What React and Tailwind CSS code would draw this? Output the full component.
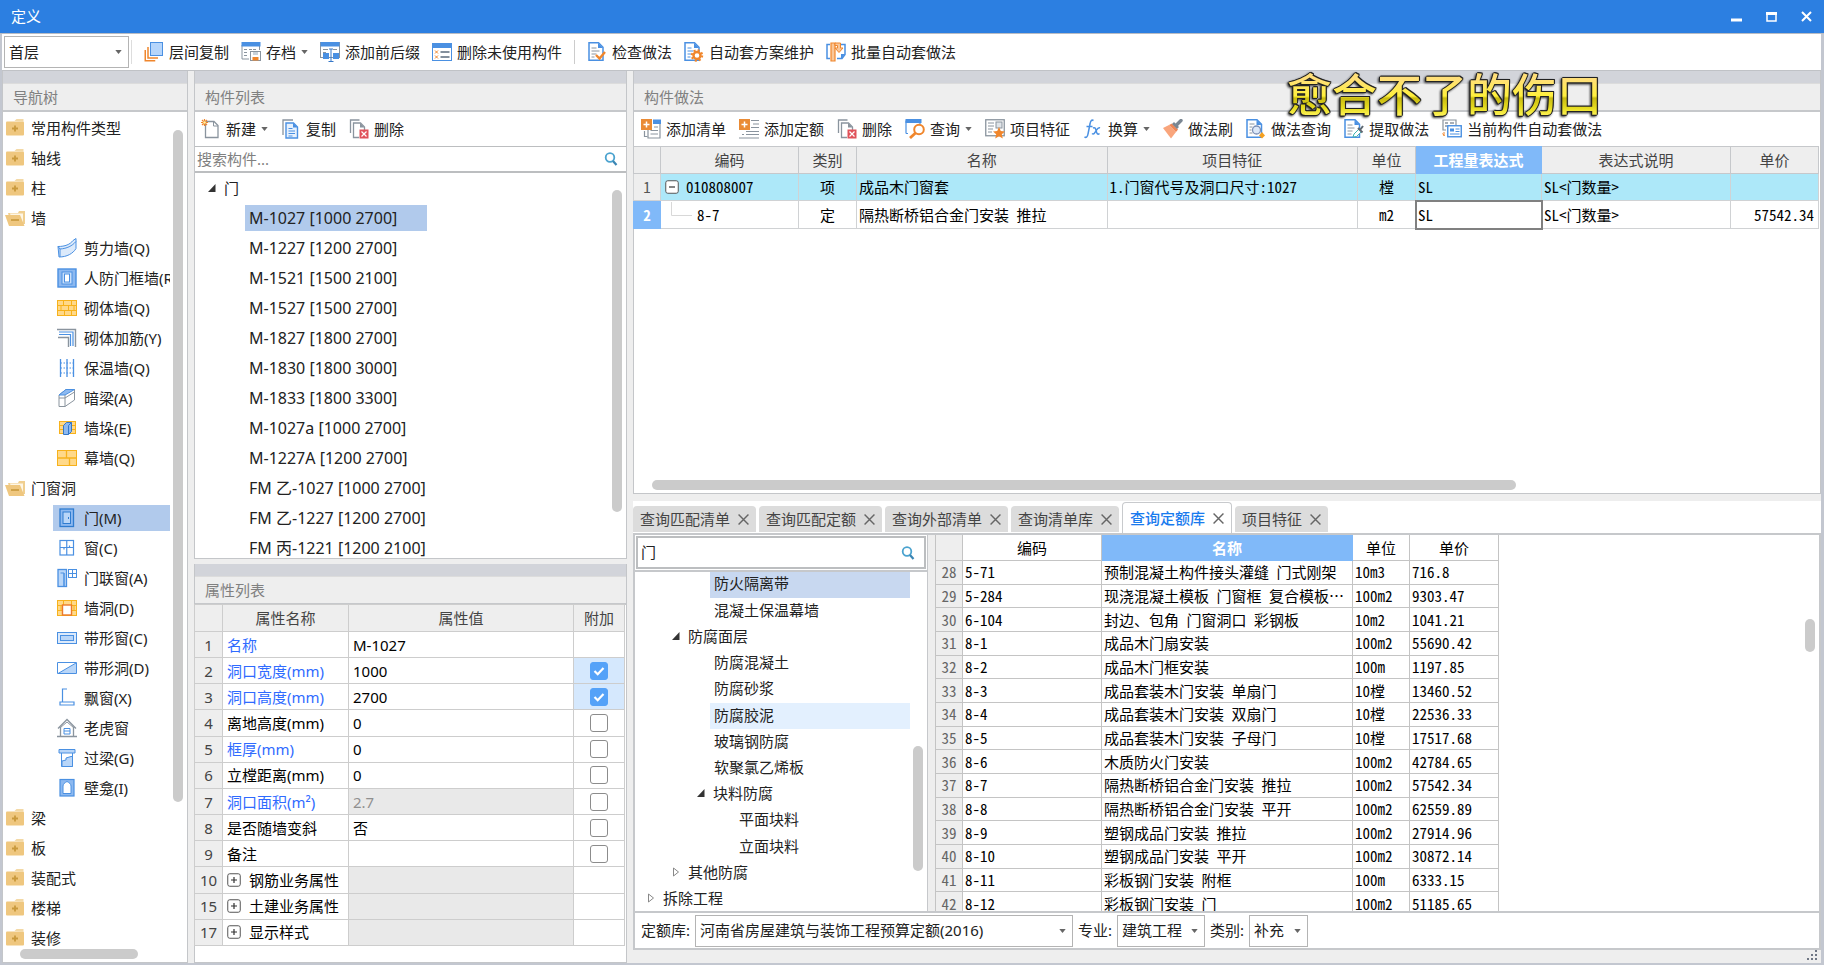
import React from "react";

const UI = "font-['Noto_Sans','Noto_Sans_CJK_SC',sans-serif]";
const MONO = "font-['Noto_Sans_Mono_CJK_SC','Noto_Sans_CJK_SC',monospace]";

const B = "#4a90e2";
const G = "#8a949e";
const O = "#f0862c";

function Icon({ children, className = "" }) {
  return (
    <svg viewBox="0 0 20 20" width="20" height="20" fill="none" aria-hidden="true" className={"shrink-0 " + className}>
      {children}
    </svg>
  );
}

const brick = (
  <>
    <rect x="0.5" y="2.5" width="19" height="15" fill="#ffd98a" stroke="#f7b21c" />
    <path d="M0 7.5h20M0 12.5h20M6.500 3v4.500M14.500 3v4.500M4 7.500v5M11.500 7.500v5M17 7.500v5M7.500 12.500v5M14.500 12.500v5" stroke="#f7b21c" />
  </>
);

const icons = {
  layerCopy: (
    <Icon>
      <path d="M4 5v11h10" stroke={O} strokeWidth="1.500" />
      <path d="M1.250 8v10.750h10" stroke={O} strokeWidth="1.500" />
      <rect x="6.500" y="0.500" width="12" height="13" fill="#b5d5fb" stroke={B} />
    </Icon>
  ),
  archive: (
    <Icon>
      <path d="M1 17V3h17.500v5M1 17h7" stroke={G} />
      <rect x="0.500" y="0" width="19" height="4.500" fill={B} />
      <path d="M3 7.500h3M3 10.500h3M3 13.500h3M8 7.500h8" stroke={G} strokeDasharray="3 1" />
      <rect x="9.500" y="9.500" width="10" height="9" fill="#fff" stroke={G} />
      <rect x="12" y="10" width="5" height="3" fill="#c9d2da" />
      <rect x="11.500" y="15" width="6" height="3.500" fill={O} />
    </Icon>
  ),
  affix: (
    <Icon>
      <rect x="0.500" y="0.500" width="19" height="15" fill="#fff" stroke={G} />
      <rect x="0.500" y="0" width="19" height="4.500" fill={B} />
      <path d="M3 7.500h5M3 10.500h3M13 7.500h4" stroke={G} />
      <rect x="3" y="11" width="6" height="6" fill={B} />
      <rect x="13" y="11" width="6" height="6" fill={B} />
      <path d="M11 7v12M8.500 19.500h5M9 7h4" stroke="#3577c8" />
    </Icon>
  ),
  delUnused: (
    <Icon>
      <rect x="0.500" y="2" width="19" height="16.500" fill="#fff" stroke={B} />
      <rect x="0" y="1" width="20" height="5" fill={B} />
      <path d="M3 8.500l3 3M6 8.500l-3 3M3 13.500l3 3M6 13.500l-3 3" stroke={O} />
      <path d="M8.500 10h9M8.500 15h9" stroke="#5b6b7c" strokeWidth="1.400" />
    </Icon>
  ),
  check: (
    <Icon>
      <path d="M2 .750h9.500l4.500 4.500v13H2z" fill="#fff" stroke={B} strokeWidth="1.500" />
      <path d="M11 1v5h5z" fill={B} />
      <path d="M4.500 6h5M4.500 9h8M4.500 12h5M4.500 15h3" stroke={G} />
      <path d="M9 13l3.500 3.500L18 10" stroke={O} strokeWidth="2.400" />
    </Icon>
  ),
  gearDoc: (
    <Icon>
      <path d="M1 .750h9.500l4.500 4.500v13H1z" fill="#fff" stroke={B} strokeWidth="1.500" />
      <path d="M10 1v5h5z" fill={B} />
      <path d="M3.500 6h4M3.500 9h6M3.500 12h4M3.500 15h3" stroke={B} />
      <circle cx="13" cy="13.500" r="3.500" fill="#fff" stroke={O} strokeWidth="2.400" />
      <circle cx="13" cy="13.500" r="5.200" stroke={O} strokeWidth="2" strokeDasharray="2.040 2.040" />
    </Icon>
  ),
  batch: (
    <Icon>
      <path d="M4 2.500H1v14h3M13 2.500h6v10l-3 4h-5" stroke={B} strokeWidth="1.500" />
      <path d="M19 12h-4v5z" fill={B} />
      <path d="M5 1h4v18H5z" fill="#f9c79a" stroke={O} strokeWidth="1.200" />
      <path d="M9 1h5.500v5H17l-4 4.500L9 6h2.500V3.500H9z" fill="#f9c79a" stroke={O} />
    </Icon>
  ),
  newDoc: (
    <Icon>
      <path d="M4.500 2.500h8.500l4 4v12H4.500z" fill="#fff" stroke={G} strokeWidth="1.300" />
      <path d="M12.500 2.500v4.500h4.500" stroke={G} />
      <path d="M3.500 0v7M0 3.500h7M1 1l5 5M6 1L1 6" stroke={O} strokeWidth="1.200" />
      <circle cx="3.500" cy="3.500" r="1.300" fill="#fff3a0" />
    </Icon>
  ),
  copy: (
    <Icon>
      <path d="M2 16V1h10" stroke={G} strokeWidth="1.300" />
      <path d="M5 4h7.500l4 4v11H5z" fill="#e7f1fd" stroke={B} strokeWidth="1.400" />
      <path d="M12 4v4.500h4.500z" fill={B} />
      <path d="M7.500 9.500h4M7.500 12h6.500M7.500 14.500h6.500M7.500 17h4" stroke={B} />
    </Icon>
  ),
  del: (
    <Icon>
      <path d="M1.500 14V1h9" stroke={G} strokeWidth="1.300" />
      <path d="M10 18.500H4.500V4h7l4 4v4" fill="#fff" stroke={G} strokeWidth="1.300" />
      <path d="M11 4v4.500h4.500z" fill={G} />
      <rect x="10.500" y="10.500" width="9" height="9" fill="#e0525a" />
      <path d="M12.500 12.500l5 5M17.500 12.500l-5 5" stroke="#fff" strokeWidth="1.200" />
    </Icon>
  ),
  addList: (
    <Icon>
      <path d="M7 5v14h12V1" fill="#fff" stroke={G} strokeWidth="1.200" />
      <path d="M3.500 12v5.500h3" stroke={G} strokeWidth="1.200" />
      <rect x="12" y="0.500" width="8" height="4.500" fill={B} />
      <path d="M13 8h4M9.500 11.500h7.500M9.500 15h7.500" stroke={G} />
      <rect x="0" y="0" width="11" height="11" fill="#ea8b35" />
      <path d="M5.500 2.500v6M2.500 5.500h6" stroke="#fff" strokeWidth="1.500" />
    </Icon>
  ),
  addQuota: (
    <Icon>
      <path d="M12 1.500h8M14 5h6M12 8.500h8M7 12.500h13M3 15.500h2M7 15.500h13M0 19h20" stroke={G} strokeWidth="1.200" />
      <rect x="0" y="0" width="11" height="11" fill="#ea8b35" />
      <path d="M5.500 2.500v6M2.500 5.500h6" stroke="#fff" strokeWidth="1.500" />
    </Icon>
  ),
  query: (
    <Icon>
      <path d="M1 14.500V2h14v3M1 14.500h2" stroke={B} strokeWidth="1.200" />
      <rect x="0.500" y="0" width="16" height="4" fill={B} />
      <circle cx="14" cy="10.500" r="4.800" fill="#fff" stroke={O} strokeWidth="2" />
      <path d="M10.500 14L5 19" stroke={O} strokeWidth="2.800" />
    </Icon>
  ),
  feature: (
    <Icon>
      <rect x="0.750" y="0.750" width="18.500" height="16" fill="#fff" stroke={G} strokeWidth="1.300" />
      <path d="M3 4h6M3 7h6M3 10h5M3 13h4" stroke={G} />
      <rect x="11" y="3" width="6" height="6" fill="#dfe4e9" stroke={G} />
      <path d="M14 8l1.800 4 4.200.400-3.200 2.900 1 4.200L14 17.300 10.200 19.500l1-4.200L8 12.400l4.200-.400z" fill={O} />
    </Icon>
  ),
  fx: (
    <Icon>
      <path d="M10.500 1.500C8.500.300 7.500 2 7 5L5 15c-.500 3-1.800 4-3.500 3M3.500 7.500h6" stroke={B} strokeWidth="1.500" />
      <path d="M10 9c2-1 2.500 0 3.200 3s1.600 4 3.300 2.500M17 9c-2-1-3 1.500-4 3s-2 4-4 2.500" stroke={B} strokeWidth="1.500" />
    </Icon>
  ),
  brush: (
    <Icon>
      <path d="M0 9l6-3 7 7-5 6.500z" fill="#f9a57c" />
      <path d="M6 6l3-1.500 6 6L13 13z" fill="#ee8656" />
      <path d="M9 5l2-2 5 5-2 2z" fill="#7b8793" />
      <path d="M13.500 6L18 1.500" stroke="#7b8793" strokeWidth="3.400" strokeLinecap="round" />
    </Icon>
  ),
  docQuery: (
    <Icon>
      <path d="M1 .750h10l4.500 4.500v13H1z" fill="#fff" stroke={B} strokeWidth="1.500" />
      <path d="M10.500 1v5h5z" fill={B} />
      <path d="M3.500 5h5M3.500 8h3M3.500 11h2M3.500 14h3" stroke={G} />
      <circle cx="10.500" cy="11" r="4" fill="#dce8f8" stroke="#7c8fb5" strokeWidth="1.300" />
      <path d="M16 13l3 3.500-3 3-3-3z" fill="#f5a020" />
    </Icon>
  ),
  extract: (
    <Icon>
      <path d="M1 .750h10l4.500 4.500v13H1z" fill="#fff" stroke={B} strokeWidth="1.500" />
      <path d="M10.500 1v5h5z" fill={B} />
      <path d="M3.500 6h5M3.500 9h7M3.500 12h5M3.500 15h4" stroke={G} />
      <path d="M9 18l1-3 5-5 2.500 2.500-5 5z" fill="#fff" stroke="#3fb3b0" />
      <path d="M14 9l4.500 4.500M16 11l3-4" stroke="#5d6872" strokeWidth="2" />
    </Icon>
  ),
  autoApply: (
    <Icon>
      <path d="M4 11H1V1h13v5" stroke={G} strokeWidth="1.200" />
      <path d="M3 4h3M8 4h4M3 7h2" stroke={G} strokeWidth="1.500" />
      <path d="M2 13v4M.500 14.500l2 2.500" stroke={O} />
      <rect x="5.750" y="6.750" width="13.500" height="11" fill="#fff" stroke={B} strokeWidth="1.400" />
      <rect x="8" y="9.500" width="4" height="3" fill={B} />
      <path d="M13.500 10h4M13.500 12.500h4M8 15h9.500" stroke={B} />
    </Icon>
  ),
  shearWall: (
    <Icon>
      <path d="M1 8.500c7 0 12-2 15-6l3-2v10c-3 5-9 8.500-17 8.500z" fill="#dceafb" stroke={B} />
      <path d="M1 8.500l2 2.500c7-.500 12-3 16-7.500M3 11v8" stroke={B} />
    </Icon>
  ),
  airWall: (
    <Icon>
      <rect x="1" y="1" width="18" height="18" fill="#8db9f0" stroke={B} strokeWidth="1.400" />
      <rect x="5" y="4" width="10" height="12" fill="#c9dffa" stroke={B} />
      <rect x="7.500" y="6" width="5" height="8" fill="#fff" stroke={B} />
    </Icon>
  ),
  brickWall: <Icon>{brick}</Icon>,
  rebar: (
    <Icon>
      <path d="M0 1.500h18.500V19M1 9.500h10.500V19" stroke={G} strokeWidth="1.400" />
      <path d="M2 4h14v14M2 6.500h11.500V18" stroke={B} strokeWidth="1.200" />
    </Icon>
  ),
  insulation: (
    <Icon>
      <path d="M3.500 1v18M10 1v18M16.500 1v18" stroke={B} strokeWidth="1.300" />
      <path d="M3.500 5h13M3.500 10h13M3.500 15h13" stroke={B} strokeDasharray="1.500 1.500" />
    </Icon>
  ),
  hiddenBeam: (
    <Icon>
      <path d="M2 7L9 1.500h8.500V12L8 18.500H2z" fill="#fff" stroke={G} />
      <path d="M2 7L9 1.500h8.500L8 7z" fill="#8db9f0" stroke={B} />
      <path d="M8 7v11.500M2 10h6l9.500-6" stroke={G} />
    </Icon>
  ),
  pier: (
    <Icon>
      <rect x="2.500" y="3.500" width="16" height="12" fill="#ffd98a" stroke="#f7b21c" />
      <path d="M2 7.500h17M2 11.500h17" stroke="#f7b21c" />
      <path d="M6.500 7.500l3-3h5v9l-3 3h-5z" fill="#8db9f0" stroke="#3577c8" />
      <path d="M11.500 16.500v-9l3-3" stroke="#3577c8" />
    </Icon>
  ),
  curtain: (
    <Icon>
      <rect x="0.500" y="2.500" width="19" height="15" fill="#ffd98a" stroke="#f7b21c" />
      <path d="M0 10h20M9.500 3v7M12.500 10v7.500" stroke="#f7b21c" strokeWidth="1.300" />
    </Icon>
  ),
  door: (
    <Icon>
      <rect x="3" y="1" width="13.500" height="17.500" fill="#8db9f0" stroke="#2f7cd0" strokeWidth="1.300" />
      <rect x="6" y="4" width="7.500" height="11.500" fill="#b9d6f8" stroke="#2f7cd0" />
      <path d="M11.500 9v2" stroke="#2f7cd0" />
    </Icon>
  ),
  window: (
    <Icon>
      <rect x="3" y="2.500" width="13.500" height="14.500" fill="#fff" stroke={B} strokeWidth="1.200" />
      <path d="M9.750 2.500v14.500M3 9.500h13.500M7 9.500v2M12.500 7.500v2" stroke={B} strokeWidth="1.200" />
    </Icon>
  ),
  doorWindow: (
    <Icon>
      <rect x="1" y="1.500" width="8.500" height="17" fill="#b9d6f8" stroke={B} strokeWidth="1.300" />
      <path d="M3.500 5h3.500v13M7 5v13.500" stroke={B} />
      <rect x="11.500" y="1.500" width="8" height="8" fill="#fff" stroke={B} />
      <path d="M15.500 1.500v8M11.500 5.500h8" stroke={B} />
    </Icon>
  ),
  wallHole: (
    <Icon>
      {brick}
      <rect x="5.500" y="7" width="9" height="10" fill="#fff" stroke="#ec7a2c" strokeWidth="1.400" />
    </Icon>
  ),
  stripWindow: (
    <Icon>
      <rect x="0.500" y="4.500" width="19" height="11" fill="#dceafb" stroke={B} />
      <rect x="3.500" y="7.500" width="13" height="5" fill="#b9d6f8" stroke={B} />
    </Icon>
  ),
  stripHole: (
    <Icon>
      <path d="M19 5v10.500H1z" fill="#b9d6f8" />
      <path d="M.500 4.500h19v11H.500zM1 15.500L19 5" stroke={B} />
    </Icon>
  ),
  bay: (
    <Icon>
      <path d="M10 1H5.500v13M3 14h14v3H3z" stroke={B} strokeWidth="1.200" />
    </Icon>
  ),
  dormer: (
    <Icon>
      <path d="M1 10.500L10 1.500l9 9M3.500 9v9M16.500 9v9M0 18.500h20" stroke={G} strokeWidth="1.300" />
      <path d="M3.500 9.500L10 4l6.500 5.500" stroke={G} />
      <path d="M7 10.500h6v5.500H7zM7 13h6" stroke={B} />
    </Icon>
  ),
  lintel: (
    <Icon>
      <path d="M2 1.500h16v3.500H2z" fill="#b9d6f8" stroke={B} />
      <path d="M4.500 5v13.500h11V5" stroke={B} />
      <path d="M5 13l4-1v-2l5-1.500 1.500 0v10H5z" fill="#b9d6f8" stroke={B} />
    </Icon>
  ),
  niche: (
    <Icon>
      <rect x="3" y="1.500" width="14" height="16.500" fill="#8db9f0" stroke={B} strokeWidth="1.200" />
      <path d="M6 15.500V8c0-2 2-3.500 4-4.500 2 1 4 2.500 4 4.500v7.500z" fill="#fff" stroke={B} />
    </Icon>
  ),
  folder: (
    <Icon>
      <path d="M9.500 3l2-2h7v2.500z" fill="#f3d9a6" />
      <rect x="1" y="3.500" width="18" height="14" rx="1" fill="#efc77f" />
      <path d="M10 7.500v6M7 10.500h6" stroke="#c9993c" strokeWidth="1.800" />
    </Icon>
  ),
  folderOpen: (
    <Icon>
      <path d="M3 5h10l1-2h6v13H6z" fill="#f0cf90" />
      <path d="M5 5.500h13v9H8z" fill="#fdf6e6" />
      <path d="M0 7h15l4.500 11H4z" fill="#efc77f" />
      <path d="M6 12h8" stroke="#c9993c" strokeWidth="1.600" />
    </Icon>
  ),
};

function Caret() {
  return (
    <svg viewBox="0 0 8 5" width="7" height="4" aria-hidden="true" className="pointer-events-none shrink-0">
      <path d="M0 0h8L4 5z" fill="#666" />
    </svg>
  );
}

function ToolButton({ icon, label, menu }) {
  return (
    <button type="button" className="flex h-7 shrink-0 items-center gap-[5px] whitespace-nowrap">
      {icons[icon]}
      <span>{label}</span>
      {menu && <Caret />}
    </button>
  );
}

function Select({ id, value, label, className = "" }) {
  return (
    <div className={"grid h-8 items-center border border-[#b4b4b4] bg-white " + className}>
      <select id={id} aria-label={label} defaultValue={value} className="h-full w-full appearance-none bg-transparent pl-1 outline-none [grid-area:1/1]">
        <option>{value}</option>
      </select>
      <span className="pointer-events-none justify-self-end pr-1.5 [grid-area:1/1]">
        <Caret />
      </span>
    </div>
  );
}

function SearchIcon() {
  return (
    <svg viewBox="0 0 14 14" width="14" height="14" fill="none" aria-hidden="true" className="shrink-0">
      <circle cx="6" cy="5.500" r="4.300" stroke="#4ba3cf" strokeWidth="1.800" />
      <path d="M9 9l3.500 4" stroke="#3b86b4" strokeWidth="2.200" />
    </svg>
  );
}

function PanelHeader({ title }) {
  return (
    <header className="shrink-0">
      <div className="h-3 bg-[#d2d4da]" />
      <h2 className="h-[29px] border-t border-b-2 border-t-[#dcdcdc] border-b-[#c6c8cb] bg-[#eeeeee] pl-[10px] leading-[26px] text-[#808080]">{title}</h2>
    </header>
  );
}

const navRows = [
  ["folder", "常用构件类型"],
  ["folder", "轴线"],
  ["folder", "柱"],
  ["folderOpen", "墙"],
  ["shearWall", "剪力墙(Q)", 1],
  ["airWall", "人防门框墙(RF)", 1],
  ["brickWall", "砌体墙(Q)", 1],
  ["rebar", "砌体加筋(Y)", 1],
  ["insulation", "保温墙(Q)", 1],
  ["hiddenBeam", "暗梁(A)", 1],
  ["pier", "墙垛(E)", 1],
  ["curtain", "幕墙(Q)", 1],
  ["folderOpen", "门窗洞"],
  ["door", "门(M)", 1],
  ["window", "窗(C)", 1],
  ["doorWindow", "门联窗(A)", 1],
  ["wallHole", "墙洞(D)", 1],
  ["stripWindow", "带形窗(C)", 1],
  ["stripHole", "带形洞(D)", 1],
  ["bay", "飘窗(X)", 1],
  ["dormer", "老虎窗", 1],
  ["lintel", "过梁(G)", 1],
  ["niche", "壁龛(I)", 1],
  ["folder", "梁"],
  ["folder", "板"],
  ["folder", "装配式"],
  ["folder", "楼梯"],
  ["folder", "装修"],
];

function NavPanel() {
  return (
    <section className="flex w-[186px] shrink-0 flex-col border border-t-0 border-[#c4c6c9] bg-white">
      <PanelHeader title="导航树" />
      <div className="flex min-h-0 flex-1">
        <ul className="min-w-0 flex-1 overflow-hidden pt-px">
          {navRows.map(([icon, label, child]) => (
            <li key={label} className={"flex h-[30px] items-center " + (child ? "pl-[50px]" : "pl-0.5")}>
              <span className={"flex h-[26px] min-w-0 flex-1 items-center whitespace-nowrap " + (child ? "gap-[7px] pl-1 " : "gap-1.5 ") + (label === "门(M)" ? "bg-[#b1caec]" : "")}>
                {icons[icon]}
                {label}
              </span>
            </li>
          ))}
        </ul>
        <div className="w-[17px] shrink-0 pt-[18px] pl-[3px]">
          <div className="h-[672px] w-[10px] rounded-full bg-[#cbcbcb]" />
        </div>
      </div>
      <div className="h-[14px] shrink-0 pt-px pl-[17px]">
        <div className="h-[10px] w-[118px] rounded-full bg-[#cbcbcb]" />
      </div>
    </section>
  );
}

const doors = [
  "M-1027 [1000 2700]",
  "M-1227 [1200 2700]",
  "M-1521 [1500 2100]",
  "M-1527 [1500 2700]",
  "M-1827 [1800 2700]",
  "M-1830 [1800 3000]",
  "M-1833 [1800 3300]",
  "M-1027a [1000 2700]",
  "M-1227A [1200 2700]",
  "FM 乙-1027 [1000 2700]",
  "FM 乙-1227 [1200 2700]",
  "FM 丙-1221 [1200 2100]",
];

function Expanded() {
  return (
    <svg viewBox="0 0 8 8" width="8" height="8" aria-hidden="true" className="shrink-0">
      <path d="M7.500 0v8H0z" fill="#333" />
    </svg>
  );
}

function Collapsed() {
  return (
    <svg viewBox="0 0 8 10" width="8" height="10" fill="none" aria-hidden="true" className="shrink-0">
      <path d="M1.500 1v8L6.500 5z" stroke="#888" />
    </svg>
  );
}

function ComponentList() {
  return (
    <section className="flex min-h-0 flex-1 flex-col border border-t-0 border-[#c4c6c9] bg-white">
      <PanelHeader title="构件列表" />
      <div className="flex h-[34px] shrink-0 items-center gap-[13px] pl-1.5">
        <ToolButton icon="newDoc" label="新建" menu />
        <ToolButton icon="copy" label="复制" />
        <ToolButton icon="del" label="删除" />
      </div>
      <div className="flex h-[27px] shrink-0 items-center border-t border-b-2 border-[#bcbec0] pr-2 pl-0.5">
        <input aria-label="搜索构件" placeholder="搜索构件..." className="min-w-0 flex-1 outline-none placeholder:text-[#808080]" />
        <SearchIcon />
      </div>
      <div className="flex min-h-0 flex-1">
        <ul className="min-w-0 flex-1 overflow-hidden">
          <li className="flex h-[30px] items-center gap-2 pl-[13px]">
            <Expanded />门
          </li>
          {doors.map((name, i) => (
            <li key={name} className="flex h-[30px] items-center pl-[50px] text-[16px]">
              <span className={"h-[26px] w-[182px] pl-1 leading-[26px] whitespace-nowrap " + (i === 0 ? "bg-[#b1caec]" : "")}>{name}</span>
            </li>
          ))}
        </ul>
        <div className="w-[14px] shrink-0 pt-[17px]">
          <div className="h-[322px] w-[10px] rounded-full bg-[#cbcbcb]" />
        </div>
      </div>
    </section>
  );
}

const props = [
  ["1", "名称", "M-1027", "blue", null],
  ["2", "洞口宽度(mm)", "1000", "blue", true],
  ["3", "洞口高度(mm)", "2700", "blue", true],
  ["4", "离地高度(mm)", "0", "", false],
  ["5", "框厚(mm)", "0", "blue", false],
  ["6", "立樘距离(mm)", "0", "", false],
  ["7", "洞口面积(m²)", "2.7", "blue", false],
  ["8", "是否随墙变斜", "否", "", false],
  ["9", "备注", "", "", false],
  ["10", "钢筋业务属性", "", "group", null],
  ["15", "土建业务属性", "", "group", null],
  ["17", "显示样式", "", "group", null],
];

function PlusBox({ minus }) {
  return (
    <svg viewBox="0 0 14 14" width="14" height="14" fill="none" aria-hidden="true" className="shrink-0">
      <rect x="0.750" y="0.750" width="12.500" height="12.500" rx="2" fill="#fff" stroke="#555" />
      <path d={minus ? "M4 7h6" : "M4 7h6M7 4v6"} stroke="#333" strokeWidth="1.200" />
    </svg>
  );
}

function PropertyPanel() {
  const cell = "border border-[#cdcdcd] p-0";
  return (
    <section className="flex h-[399px] shrink-0 flex-col border border-t-0 border-[#c4c6c9] bg-white">
      <PanelHeader title="属性列表" />
      <table className="-mt-px -ml-px h-[342px] w-[431px] table-fixed border-collapse leading-5">
        <colgroup>
          <col className="w-[28px]" />
          <col className="w-[126px]" />
          <col />
          <col className="w-[51px]" />
        </colgroup>
        <thead>
          <tr className="h-[27px] bg-[#eeeeee] text-[#444]">
            <th className={cell} />
            <th className={cell + " font-normal"}>属性名称</th>
            <th className={cell + " font-normal"}>属性值</th>
            <th className={cell + " font-normal"}>附加</th>
          </tr>
        </thead>
        <tbody>
          {props.map(([n, name, value, kind, checked]) => (
            <tr key={n} className="h-[26px]">
              <td className={cell + " bg-[#eeeeee] text-center text-[#444]"}>{n}</td>
              <td className={cell + " pl-1 whitespace-nowrap " + (kind === "blue" ? "text-[#2f6bff]" : "text-black")}>
                <span className="flex items-center gap-2">
                  {kind === "group" && <PlusBox />}
                  {name}
                </span>
              </td>
              <td className={cell + " pl-1 " + (kind === "group" || n === "7" ? "bg-[#e9e9e9] text-[#909090]" : "text-black")}>{value}</td>
              <td className={cell + " text-center " + (checked ? "bg-[#d5e8fd]" : "")}>
                {checked !== null && (
                  <span className="grid place-items-center">
                    <input
                      type="checkbox"
                      aria-label={name}
                      defaultChecked={checked}
                      className="peer h-[18px] w-[18px] appearance-none rounded-[3px] border border-[#8c8c8c] bg-white [grid-area:1/1] checked:border-[#55a2f8] checked:bg-[#55a2f8]"
                    />
                    <svg viewBox="0 0 18 18" width="18" height="18" fill="none" aria-hidden="true" className="pointer-events-none invisible [grid-area:1/1] peer-checked:visible">
                      <path d="M4.500 9l3.200 3.200L13.500 6" stroke="#fff" strokeWidth="2.200" />
                    </svg>
                  </span>
                )}
              </td>
            </tr>
          ))}
        </tbody>
      </table>
    </section>
  );
}

function MethodPanel() {
  const th = "border border-[#c6c8cb] p-0 font-normal";
  const td = "border border-[#d0d2d4] p-0";
  return (
    <section className="flex min-h-0 flex-1 flex-col border border-t-0 border-[#c4c6c9] bg-white">
      <PanelHeader title="构件做法" />
      <div className="flex h-[34px] shrink-0 items-center gap-[13px] overflow-hidden pl-[7px]">
        <ToolButton icon="addList" label="添加清单" />
        <ToolButton icon="addQuota" label="添加定额" />
        <ToolButton icon="del" label="删除" />
        <ToolButton icon="query" label="查询" menu />
        <ToolButton icon="feature" label="项目特征" />
        <ToolButton icon="fx" label="换算" menu />
        <ToolButton icon="brush" label="做法刷" />
        <ToolButton icon="docQuery" label="做法查询" />
        <ToolButton icon="extract" label="提取做法" />
        <ToolButton icon="autoApply" label="当前构件自动套做法" />
      </div>
      <table className="-ml-px w-full table-fixed border-collapse leading-5 text-black">
        <colgroup>
          <col className="w-[27px]" />
          <col className="w-[138px]" />
          <col className="w-[58px]" />
          <col />
          <col />
          <col className="w-[58px]" />
          <col className="w-[126px]" />
          <col className="w-[189px]" />
          <col className="w-[88px]" />
        </colgroup>
        <thead>
          <tr className="h-[27px] bg-[#eeeeee] text-[#444]">
            <th className={th} />
            <th className={th}>编码</th>
            <th className={th}>类别</th>
            <th className={th}>名称</th>
            <th className={th}>项目特征</th>
            <th className={th}>单位</th>
            <th className="border border-[#80b9f9] bg-[#80b9f9] p-0 font-bold text-white">工程量表达式</th>
            <th className={th}>表达式说明</th>
            <th className={th}>单价</th>
          </tr>
        </thead>
        <tbody className={MONO}>
          <tr className="h-[27px] bg-[#ade8f9]">
            <td className={td + " bg-[#eeeeee] text-center text-[#555]"}>1</td>
            <td className={td + " pl-1"}>
              <span className="flex items-center gap-[7px]">
                <PlusBox minus />
                010808007
              </span>
            </td>
            <td className={td + " text-center"}>项</td>
            <td className={td + " pl-0.5"}>成品木门窗套</td>
            <td className={td + " pl-0.5"}>1.门窗代号及洞口尺寸:1027</td>
            <td className={td + " text-center"}>樘</td>
            <td className={td + " pl-0.5"}>SL</td>
            <td className={td + " pl-0.5"}>SL&lt;门数量&gt;</td>
            <td className={td} />
          </tr>
          <tr className="h-[28px]">
            <td className="border border-[#80b9f9] bg-[#80b9f9] p-0 text-center font-bold text-white">2</td>
            <td className={td + " pl-[10px]"}>
              <span className="flex items-center gap-[5px]">
                <svg viewBox="0 0 21 26" width="21" height="26" fill="none" aria-hidden="true">
                  <path d="M.500 0v13.500H21" stroke="#d8d8d8" />
                </svg>
                8-7
              </span>
            </td>
            <td className={td + " text-center"}>定</td>
            <td className={td + " pl-0.5"}>隔热断桥铝合金门安装 推拉</td>
            <td className={td} />
            <td className={td + " text-center"}>m2</td>
            <td className={td + " pl-0.5 outline-2 -outline-offset-1 outline-[#808080]"}>SL</td>
            <td className={td + " pl-0.5"}>SL&lt;门数量&gt;</td>
            <td className={td + " pr-1 text-right"}>57542.34</td>
          </tr>
        </tbody>
      </table>
      <div className="flex-1" />
      <div className="h-[13px] shrink-0 pl-[18px]">
        <div className="h-[10px] w-[74%] rounded-full bg-[#cbcbcb]" />
      </div>
    </section>
  );
}

const tabs = ["查询匹配清单", "查询匹配定额", "查询外部清单", "查询清单库", "查询定额库", "项目特征"];

function Cross() {
  return (
    <svg viewBox="0 0 10 10" width="11" height="11" fill="none" aria-hidden="true" className="shrink-0">
      <path d="M.500 .500l9 9M9.500 .500l-9 9" stroke="#666" strokeWidth="1.300" />
    </svg>
  );
}

const quotaTree = [
  ["防火隔离带", "pl-[75px]", "", "bg-[#c8d8f0]"],
  ["混凝土保温幕墙", "pl-[75px]"],
  ["防腐面层", "pl-[37px]", "open"],
  ["防腐混凝土", "pl-[75px]"],
  ["防腐砂浆", "pl-[75px]"],
  ["防腐胶泥", "pl-[75px]", "", "bg-[#e3f0fe]"],
  ["玻璃钢防腐", "pl-[75px]"],
  ["软聚氯乙烯板", "pl-[75px]"],
  ["块料防腐", "pl-[62px]", "open"],
  ["平面块料", "pl-[100px]"],
  ["立面块料", "pl-[100px]"],
  ["其他防腐", "pl-[37px]", "closed"],
  ["拆除工程", "pl-[12px]", "closed"],
];

const quotas = [
  [28, "5-71", "预制混凝土构件接头灌缝 门式刚架", "10m3", "716.8"],
  [29, "5-284", "现浇混凝土模板 门窗框 复合模板…", "100m2", "9303.47"],
  [30, "6-104", "封边、包角 门窗洞口 彩钢板", "10m2", "1041.21"],
  [31, "8-1", "成品木门扇安装", "100m2", "55690.42"],
  [32, "8-2", "成品木门框安装", "100m", "1197.85"],
  [33, "8-3", "成品套装木门安装 单扇门", "10樘", "13460.52"],
  [34, "8-4", "成品套装木门安装 双扇门", "10樘", "22536.33"],
  [35, "8-5", "成品套装木门安装 子母门", "10樘", "17517.68"],
  [36, "8-6", "木质防火门安装", "100m2", "42784.65"],
  [37, "8-7", "隔热断桥铝合金门安装 推拉", "100m2", "57542.34"],
  [38, "8-8", "隔热断桥铝合金门安装 平开", "100m2", "62559.89"],
  [39, "8-9", "塑钢成品门安装 推拉", "100m2", "27914.96"],
  [40, "8-10", "塑钢成品门安装 平开", "100m2", "30872.14"],
  [41, "8-11", "彩板钢门安装 附框", "100m", "6333.15"],
  [42, "8-12", "彩板钢门安装 门", "100m2", "51185.65"],
];

function QuotaPanel() {
  const cell = "border border-[#c4c4c4] p-0";
  return (
    <section className="flex h-[449px] shrink-0 flex-col">
      <div role="tablist" className="flex h-8 shrink-0 items-end gap-[3px] bg-white">
        {tabs.map((t) => {
          const active = t === "查询定额库";
          return (
            <button
              key={t}
              type="button"
              role="tab"
              aria-selected={active}
              className={
                "flex shrink-0 items-center gap-2 rounded-t-[4px] px-[7px] whitespace-nowrap " +
                (active ? "h-[31px] border border-b-0 border-[#c8cacd] bg-white font-medium text-[#1a7bee]" : "mb-px h-[26px] bg-[#dcdcdc] text-[#444]")
              }
            >
              {t}
              <Cross />
            </button>
          );
        })}
      </div>
      <div className="flex min-h-0 flex-1 flex-col border-2 border-[#c6c8cb] bg-white">
        <div className="flex min-h-0 flex-1 overflow-hidden">
          <div className="flex w-[293px] shrink-0 flex-col border-r border-[#c6c8cb]">
            <div className="shrink-0 border-b-2 border-[#c6c8cb] p-px">
              <div className="flex h-[33px] items-center border-2 border-[#bcbec0] pr-[9px] pl-[3px]">
                <input aria-label="查询" defaultValue="门" className="min-w-0 flex-1 outline-none" />
                <SearchIcon />
              </div>
            </div>
            <div className="flex min-h-0 flex-1">
              <ul className="flex h-[341px] min-w-0 flex-1 flex-col">
                {quotaTree.map(([name, pad, state, bg]) => (
                  <li key={name} className={"flex min-h-0 flex-1 items-center " + pad}>
                    <span className={"flex h-full flex-1 items-center pb-[3px] whitespace-nowrap " + (state ? "gap-2 " : "pl-1 ") + (bg || "")}>
                      {state === "open" && <Expanded />}
                      {state === "closed" && <Collapsed />}
                      {name}
                    </span>
                  </li>
                ))}
              </ul>
              <div className="w-[17px] shrink-0 pt-[174px] pl-[3px]">
                <div className="h-[125px] w-[10px] rounded-full bg-[#cbcbcb]" />
              </div>
            </div>
          </div>
          <div className="w-[7px] shrink-0 bg-[#eeeeee]" />
          <div className={"flex min-w-0 flex-1 overflow-hidden text-black " + MONO}>
            <table className="-mt-px h-[382px] w-[564px] shrink-0 table-fixed border-collapse leading-[18px]">
              <colgroup>
                <col className="w-[27px]" />
                <col className="w-[139px]" />
                <col className="w-[251px]" />
                <col className="w-[57px]" />
                <col className="w-[89px]" />
              </colgroup>
              <thead>
                <tr className="h-[26px]">
                  <th className={cell + " bg-[#eeeeee]"} />
                  <th className={cell + " font-normal"}>编码</th>
                  <th className="border border-[#80b9f9] bg-[#80b9f9] p-0 font-bold text-white">名称</th>
                  <th className={cell + " font-normal"}>单位</th>
                  <th className={cell + " font-normal"}>单价</th>
                </tr>
              </thead>
              <tbody>
                {quotas.map(([n, code, name, unit, price]) => (
                  <tr key={n}>
                    <td className={cell + " bg-[#eeeeee] text-center text-[#666]"}>{n}</td>
                    <td className={cell + " pl-0.5"}>{code}</td>
                    <td className={cell + " overflow-hidden pl-0.5 whitespace-nowrap"}>{name}</td>
                    <td className={cell + " pl-0.5 whitespace-nowrap"}>{unit}</td>
                    <td className={cell + " pl-0.5"}>{price}</td>
                  </tr>
                ))}
              </tbody>
            </table>
            <div className="flex-1" />
            <div className="w-[14px] shrink-0 pt-[84px]">
              <div className="h-[33px] w-[10px] rounded-full bg-[#cbcbcb]" />
            </div>
          </div>
        </div>
        <div className="flex h-[37px] shrink-0 items-center border-t-2 border-[#c6c8cb] pl-1.5">
          <label htmlFor="library" className="pr-[5px]">定额库:</label>
          <Select id="library" value="河南省房屋建筑与装饰工程预算定额(2016)" className="w-[378px]" />
          <label htmlFor="major" className="px-[5px]">专业:</label>
          <Select id="major" value="建筑工程" className="w-[88px]" />
          <label htmlFor="category" className="px-[5px]">类别:</label>
          <Select id="category" value="补充" className="w-[59px]" />
        </div>
      </div>
    </section>
  );
}

export default function App() {
  return (
    <div className={"relative flex h-screen flex-col overflow-hidden bg-[#eeeeee] text-[15px] text-[#222] " + UI}>
      <div className="flex h-[34px] shrink-0 items-center border-b border-[#b8bcc4] bg-[#2c7fe1] pr-3 pl-[11px] text-white">
        <h1 className="flex-1">定义</h1>
        <div className="flex items-center gap-[24px]">
          <button type="button" aria-label="最小化">
            <svg viewBox="0 0 11 11" width="11" height="11" fill="none" className="block"><path d="M0 9h11" stroke="#fff" strokeWidth="3" /></svg>
          </button>
          <button type="button" aria-label="最大化">
            <svg viewBox="0 0 11 11" width="11" height="11" fill="none" className="block"><path d="M1 2v8h9V2z" stroke="#fff" strokeWidth="1.500" /><path d="M0 2.500h11" stroke="#fff" strokeWidth="3" /></svg>
          </button>
          <button type="button" aria-label="关闭">
            <svg viewBox="0 0 11 11" width="11" height="11" fill="none" className="block"><path d="M1 1l9 9M10 1l-9 9" stroke="#fff" strokeWidth="2" /></svg>
          </button>
        </div>
      </div>
      <div className="flex min-h-0 flex-1 flex-col border-r-[3px] border-b-2 border-l-2 border-[#c3c7d0]">
        <div className="flex h-[37px] shrink-0 items-center gap-3 border-b border-[#c0c2c6] bg-white pl-[2px]">
          <div className="flex h-full items-center gap-[2px]">
            <Select id="floor" label="楼层" value="首层" className="w-[125px]" />
            <span className="h-6 w-px bg-[#dddddd]" />
          </div>
          <ToolButton icon="layerCopy" label="层间复制" />
          <ToolButton icon="archive" label="存档" menu />
          <ToolButton icon="affix" label="添加前后缀" />
          <ToolButton icon="delUnused" label="删除未使用构件" />
          <span className="h-6 w-px bg-[#cccccc]" />
          <ToolButton icon="check" label="检查做法" />
          <ToolButton icon="gearDoc" label="自动套方案维护" />
          <ToolButton icon="batch" label="批量自动套做法" />
        </div>
        <main className="flex min-h-0 flex-1 gap-1.5">
          <NavPanel />
          <div className="flex w-[433px] shrink-0 flex-col gap-[5px]">
            <ComponentList />
            <PropertyPanel />
          </div>
          <div className="flex min-w-0 flex-1 flex-col gap-[7px]">
            <MethodPanel />
            <div className="shrink-0">
              <QuotaPanel />
              <div className="flex h-[13px] justify-end pr-[3px]">
                <svg viewBox="0 0 11 11" width="11" height="11" aria-label="调整大小">
                  <path d="M8 0h2v2H8zM4 4h2v2H4zM8 4h2v2H8zM0 8h2v2H0zM4 8h2v2H4zM8 8h2v2H8z" fill="#6f7684" />
                </svg>
              </div>
            </div>
          </div>
        </main>
      </div>
      <div className="pointer-events-none absolute top-[69px] right-[222px] bg-[linear-gradient(180deg,#ffdf78_20%,#fff03c_52%,#c9bb10_56%,#e6dc20_75%,#fff45a_90%)] bg-clip-text text-[45px] leading-[52px] font-medium whitespace-nowrap text-transparent filter-[drop-shadow(-1px_0_0_#222)_drop-shadow(0_1px_0_#222)_drop-shadow(1px_-1px_0_#222)_drop-shadow(-1px_1px_1px_#333)]">
        愈合不了的伤口
      </div>
    </div>
  );
}
